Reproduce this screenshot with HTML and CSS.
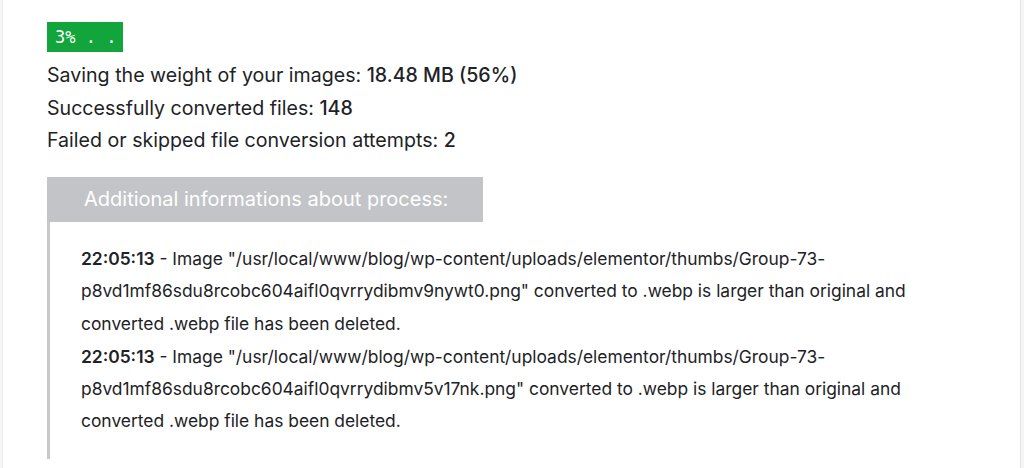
FILE: index.html
```html
<!DOCTYPE html>
<html>
<head>
<meta charset="utf-8">
<link rel="stylesheet" href="styles.css">
</head>
<body>
<div class="frame">
  <div class="content">
    <div class="badge">3% . .</div>
    <div class="stats">
      <p>Saving the weight of your images: <strong>18.48 MB (56%)</strong></p>
      <p>Successfully converted files: <strong>148</strong></p>
      <p>Failed or skipped file conversion attempts: <strong>2</strong></p>
    </div>
    <div class="info-title">Additional informations about process:</div>
    <div class="info-log">
      <p><strong>22:05:13</strong> - Image "/usr/local/www/blog/wp-content/uploads/elementor/thumbs/Group-73-p8vd1mf86sdu8rcobc604aifl0qvrrydibmv9nywt0.png" converted to .webp is larger than original and converted .webp file has been deleted.</p>
      <p><strong>22:05:13</strong> - Image "/usr/local/www/blog/wp-content/uploads/elementor/thumbs/Group-73-p8vd1mf86sdu8rcobc604aifl0qvrrydibmv5v17nk.png" converted to .webp is larger than original and converted .webp file has been deleted.</p>
    </div>
  </div>
</div>
</body>
</html>
```

FILE: styles.css
```css
html, body {
  margin: 0;
  padding: 0;
  background: #f6f6f7;
  height: 100%;
}
body {
  font-family: Inter, "Liberation Sans", Arial, sans-serif;
  color: #1d2327;
}
.frame {
  margin-left: 2px;
  width: 1017px;
  min-height: 100%;
  background: #ffffff;
  border-left: 1px solid #ececec;
  border-right: 1px solid #e4e4e4;
}
.content {
  padding: 22px 0 0 44px;
  width: 873px;
}
.badge {
  display: inline-block;
  background: #11a53b;
  color: #ffffff;
  font-family: "DejaVu Sans Mono", "Liberation Mono", monospace;
  font-size: 17px;
  line-height: 30px;
  height: 30px;
  padding: 0 8px;
  width: 60px;
  white-space: pre;
}
.stats {
  margin-top: 7px;
}
.stats p {
  margin: 0;
  font-size: 19.6px;
  line-height: 32.7px;
}
.stats strong {
  font-weight: 500;
}
.info-title {
  margin-top: 20px;
  width: 363px;
  background: #c3c4c7;
  color: #ffffff;
  font-size: 20px;
  line-height: 45px;
  padding: 0 36px 0 37px;
  white-space: nowrap;
}
.info-log {
  border-left: 3px solid #c8c9cb;
  padding: 21px 0 22px 31px;
}
.info-log p {
  margin: 0 0 1px;
  font-size: 17.4px;
  line-height: 32.2px;
}
.info-log p:last-child {
  margin-bottom: 0;
}
.info-log strong {
  font-weight: 600;
}
```
